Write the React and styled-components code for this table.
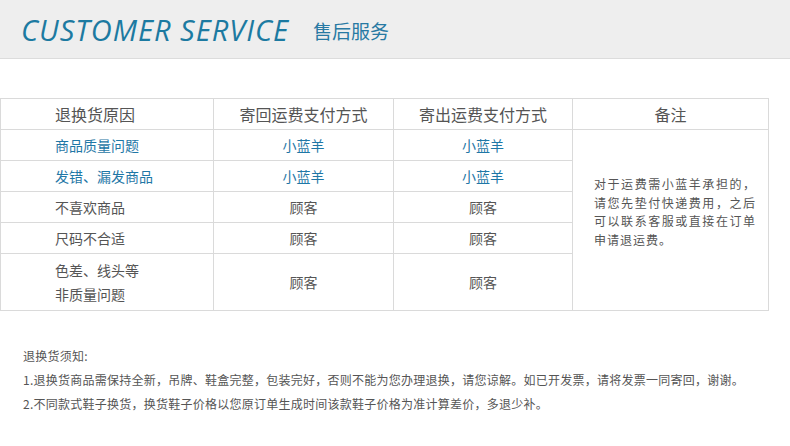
import styled, { createGlobalStyle } from 'styled-components'

const rows = [
  { reason: '商品质量问题', back: '小蓝羊', out: '小蓝羊', ours: true },
  { reason: '发错、漏发商品', back: '小蓝羊', out: '小蓝羊', ours: true },
  { reason: '不喜欢商品', back: '顾客', out: '顾客' },
  { reason: '尺码不合适', back: '顾客', out: '顾客' },
  { reason: ['色差、线头等', '非质量问题'], back: '顾客', out: '顾客', tall: true },
]

const notes = [
  '1.退换货商品需保持全新，吊牌、鞋盒完整，包装完好，否则不能为您办理退换，请您谅解。如已开发票，请将发票一同寄回，谢谢。',
  '2.不同款式鞋子换货，换货鞋子价格以您原订单生成时间该款鞋子价格为准计算差价，多退少补。',
]

function App() {
  return (
    <>
      <GlobalStyle />
      <Header>
        <Title>CUSTOMER SERVICE</Title>
        <SubTitle>售后服务</SubTitle>
      </Header>
      <Table>
        <colgroup>
          <col style={{ width: 213 }} />
          <col style={{ width: 180 }} />
          <col style={{ width: 179 }} />
          <col style={{ width: 196 }} />
        </colgroup>
        <thead>
          <tr>
            <Th $left>退换货原因</Th>
            <Th>寄回运费支付方式</Th>
            <Th>寄出运费支付方式</Th>
            <Th>备注</Th>
          </tr>
        </thead>
        <tbody>
          {rows.map((r, i) => (
            <Row key={i} $tall={r.tall}>
              <Td $left $blue={r.ours}>
                {Array.isArray(r.reason) ? r.reason.map((l) => <Line key={l}>{l}</Line>) : r.reason}
              </Td>
              <Td $blue={r.ours}>{r.back}</Td>
              <Td $blue={r.ours}>{r.out}</Td>
              {i === 0 && (
                <NoteCell rowSpan={rows.length}>
                  <NoteText>对于运费需小蓝羊承担的，请您先垫付快递费用，之后可以联系客服或直接在订单申请退运费。</NoteText>
                </NoteCell>
              )}
            </Row>
          ))}
        </tbody>
      </Table>
      <Notice>
        <p>退换货须知:</p>
        {notes.map((n) => (
          <p key={n}>{n}</p>
        ))}
      </Notice>
    </>
  )
}

const GlobalStyle = createGlobalStyle`
  body {
    margin: 0;
    background: #fff;
    font-family: "Noto Sans CJK SC", "Noto Sans", sans-serif;
    color: #555;
  }
`

const Header = styled.div`
  height: 59px;
  background: #eeeeee;
  border-bottom: 1px solid #dcdcdc;
  display: flex;
  align-items: center;
  padding-left: 21px;
  box-sizing: border-box;
`

const Title = styled.h1`
  margin: 0;
  font-family: "Open Sans", sans-serif;
  font-style: italic;
  font-weight: 400;
  font-size: 29px;
  letter-spacing: 1px;
  color: #1c7aa1;
`

const SubTitle = styled.span`
  margin-left: 24px;
  font-size: 19px;
  color: #2779a3;
  padding-top: 2px;
`

const Table = styled.table`
  margin-top: 39px;
  width: 769px;
  border-collapse: collapse;
  table-layout: fixed;
`

const Th = styled.th`
  height: 30px;
  padding: 0 0 0 ${(p) => (p.$left ? '54px' : '0')};
  border: 1px solid #dadada;
  font-size: 16px;
  font-weight: 400;
  color: #555;
  text-align: ${(p) => (p.$left ? 'left' : 'center')};
`

const Row = styled.tr`
  height: ${(p) => (p.$tall ? '57px' : '31px')};
`

const Td = styled.td`
  padding: 0 0 0 ${(p) => (p.$left ? '54px' : '0')};
  border: 1px solid #dadada;
  font-size: 14px;
  color: ${(p) => (p.$blue ? '#1f77a6' : '#555')};
  text-align: ${(p) => (p.$left ? 'left' : 'center')};
  vertical-align: middle;
`

const Line = styled.div`
  line-height: 24px;
`

const NoteCell = styled.td`
  border: 1px solid #dadada;
  padding: 0 0 16px 21px;
  vertical-align: middle;
`

const NoteText = styled.div`
  width: 162px;
  font-size: 12px;
  line-height: 18.5px;
  letter-spacing: 1px;
  text-align: justify;
  color: #555;
`

const Notice = styled.div`
  padding: 33px 0 0 23px;
  font-size: 12px;
  letter-spacing: 0.25px;
  color: #555;

  p {
    margin: 0;
    line-height: 24px;
  }
`

export default App
